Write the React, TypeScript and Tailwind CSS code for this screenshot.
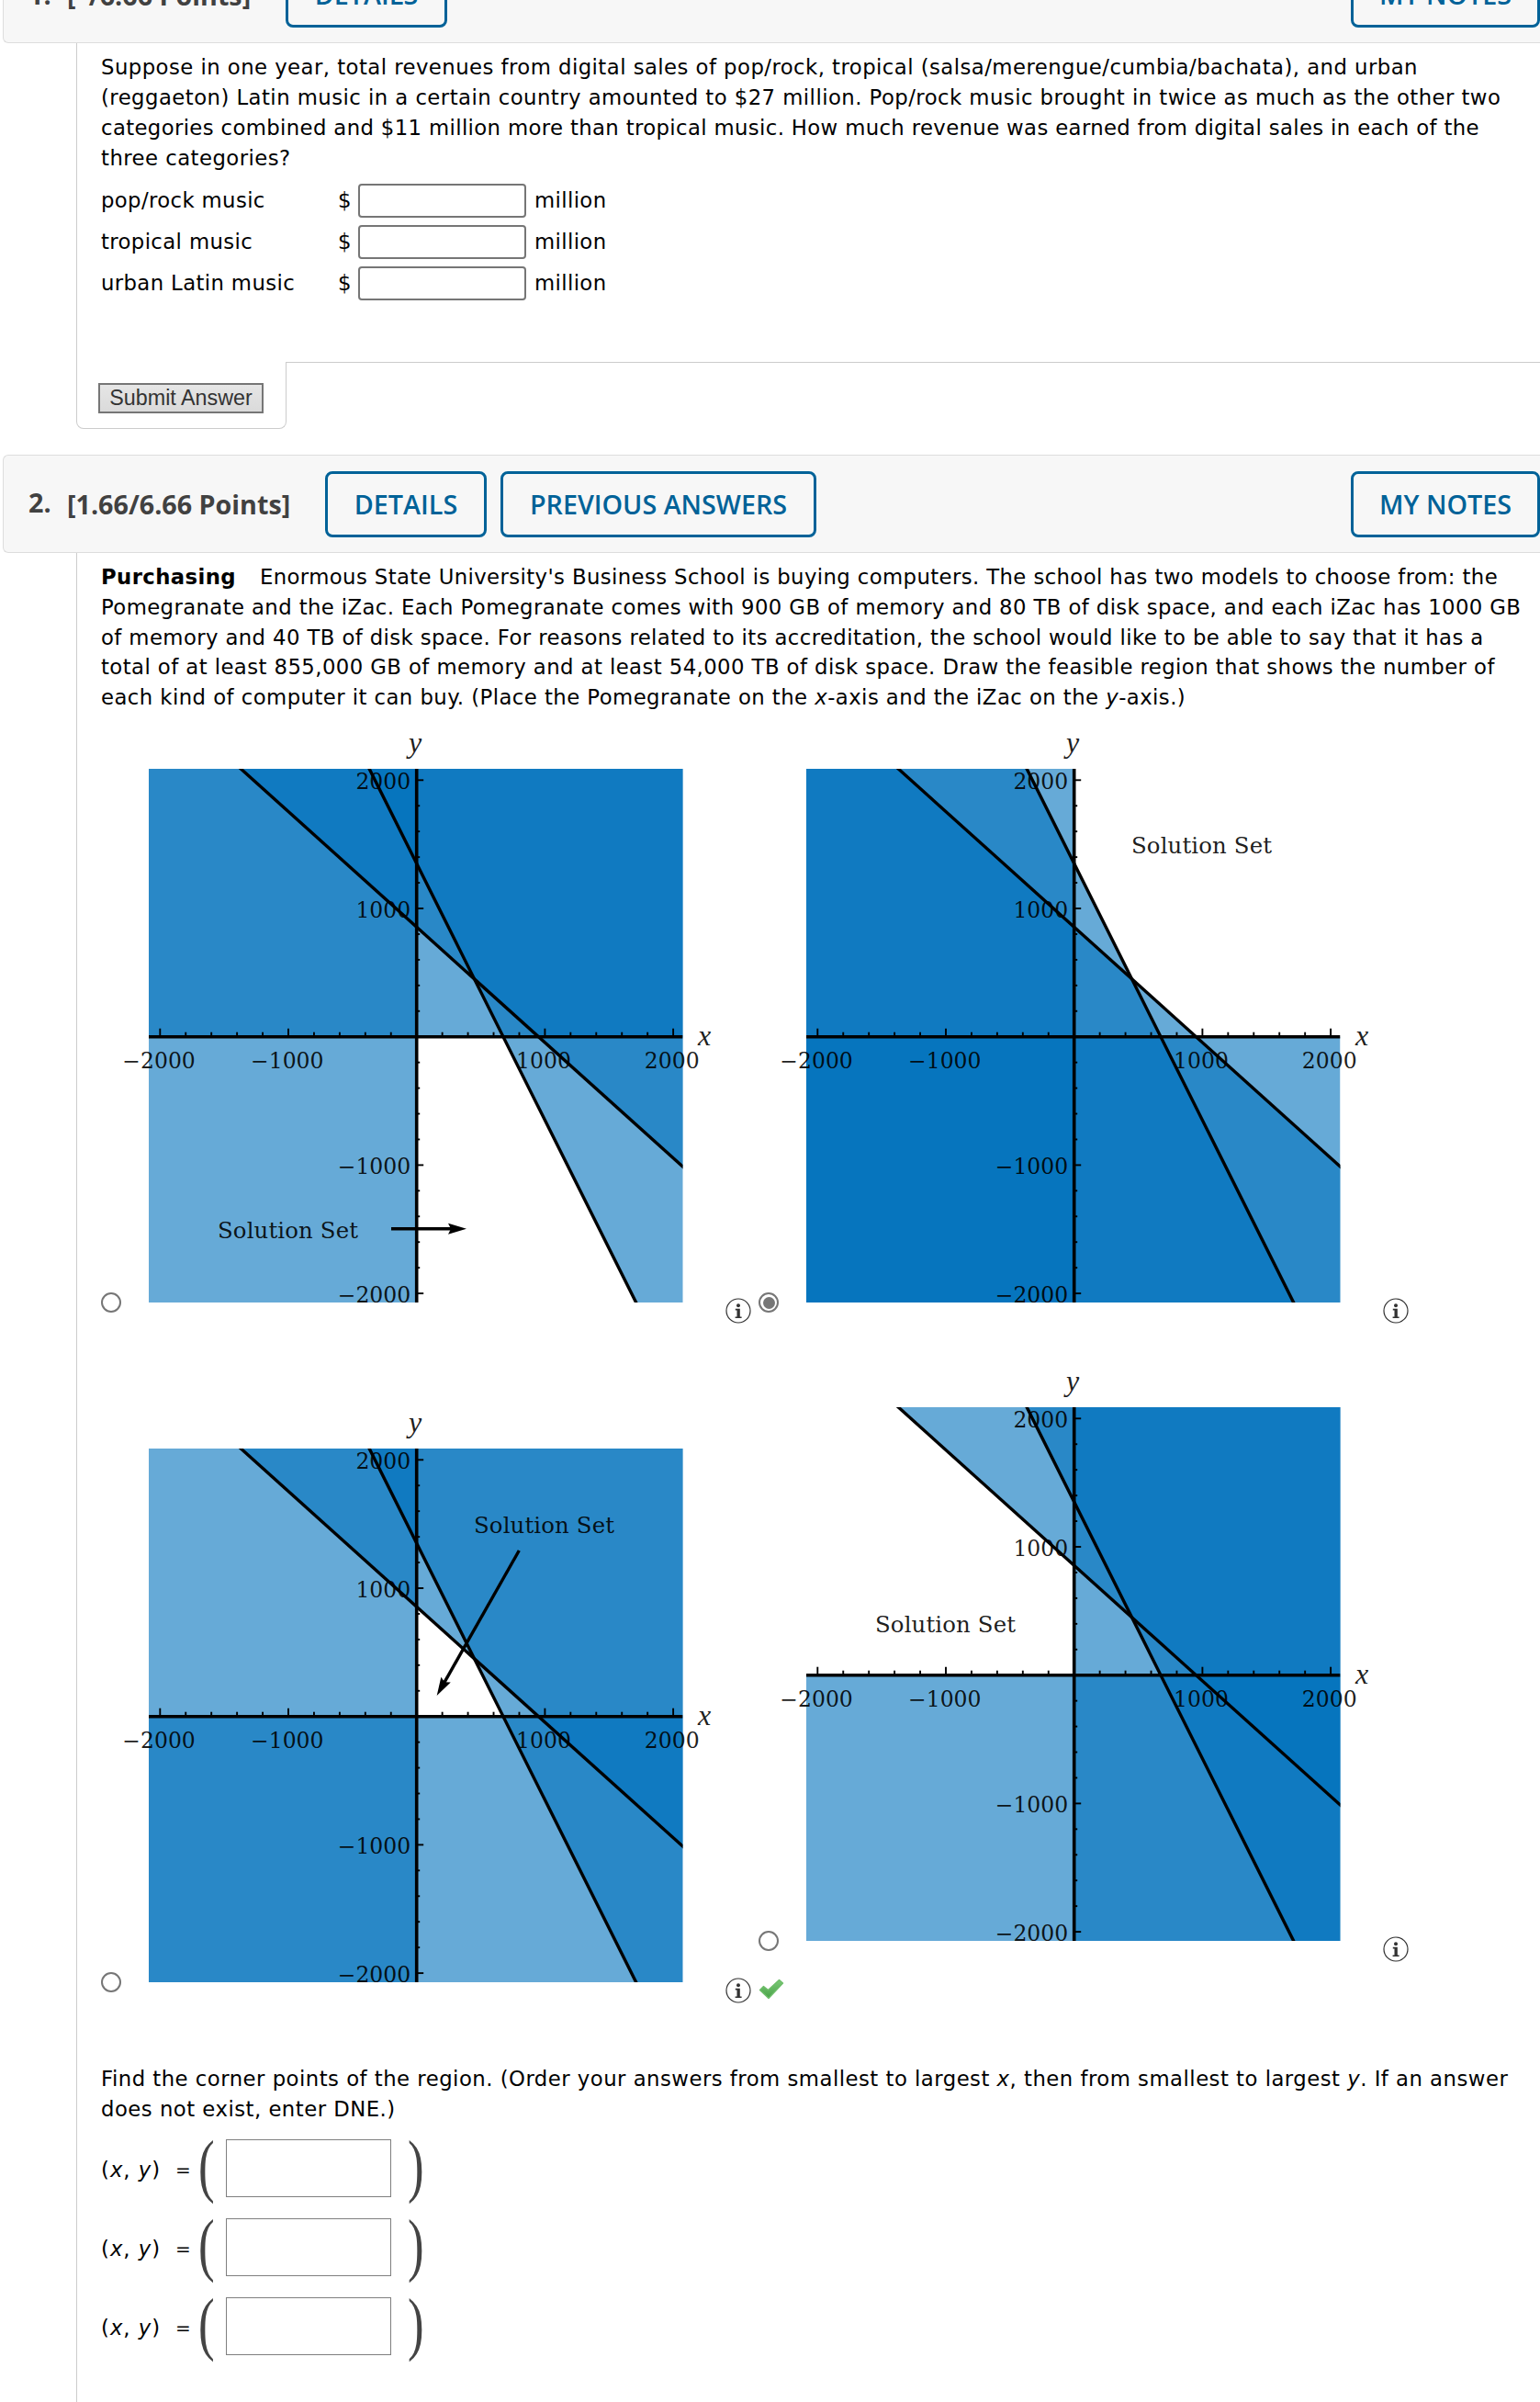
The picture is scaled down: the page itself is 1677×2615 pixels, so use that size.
import React from "react";

type Shade = "left" | "right" | "above" | "below" | "overA" | "underA" | "overB" | "underB";

interface PlotProps {
  id: string;
  shades: Shade[];
  label: { x: number; y: number };
  arrow?: { x1: number; y1: number; x2: number; y2: number };
}

// plot area inside the 656 x 620 drawing
const L = 29;
const T = 37;
const R = 610.5;
const B = 618;
const OX = 320.7;
const OY = 328.7;
const U = 0.1397;

const px = (x: number) => OX + x * U;
const py = (y: number) => OY - y * U;

// memory: 900x + 1000y = 855000, disk: 80x + 40y = 54000
const lineA = (x: number) => 855 - 0.9 * x;
const lineB = (x: number) => 1350 - 2 * x;

const halfPlane = (f: (x: number) => number, over: boolean) => {
  const far = over ? 20000 : -20000;
  return `${px(-5000)},${py(f(-5000))} ${px(5000)},${py(f(5000))} ${px(5000)},${py(far)} ${px(-5000)},${py(far)}`;
};

const shapes: Record<Shade, string> = {
  left: `${L},${T} ${OX},${T} ${OX},${B} ${L},${B}`,
  right: `${OX},${T} ${R},${T} ${R},${B} ${OX},${B}`,
  above: `${L},${T} ${R},${T} ${R},${OY} ${L},${OY}`,
  below: `${L},${OY} ${R},${OY} ${R},${B} ${L},${B}`,
  overA: halfPlane(lineA, true),
  underA: halfPlane(lineA, false),
  overB: halfPlane(lineB, true),
  underB: halfPlane(lineB, false),
};

const majors = [-2000, -1000, 1000, 2000];
const minors = Array.from({ length: 21 }, (_, i) => -2000 + i * 200).filter(v => v % 1000 !== 0);
const fmt = (v: number) => (v < 0 ? `\u2212${-v}` : `${v}`);

function Arrow({ x1, y1, x2, y2 }: { x1: number; y1: number; x2: number; y2: number }) {
  const len = Math.hypot(x2 - x1, y2 - y1);
  const angle = (Math.atan2(y2 - y1, x2 - x1) * 180) / Math.PI;
  return (
    <g transform={`translate(${x1} ${y1}) rotate(${angle})`}>
      <line x1={0} y1={0} x2={len - 14} y2={0} stroke="#000" strokeWidth={3.4} />
      <path d={`M${len} 0 L${len - 20} -6 L${len - 17} 0 L${len - 20} 6 Z`} fill="#000" />
    </g>
  );
}

function Plot({ id, shades, label, arrow }: PlotProps) {
  return (
    <svg width={656} height={620} viewBox="0 0 656 620" className="block shrink-0 tracking-normal">
      <clipPath id={id}>
        <rect x={L} y={T} width={R - L} height={B - T} />
      </clipPath>
      <g clipPath={`url(#${id})`}>
        {shades.map(s => (
          <polygon key={s} points={shapes[s]} fill="#0072bc" fillOpacity={0.6} />
        ))}
        <g stroke="#000" strokeWidth={3.4}>
          <line x1={px(-5000)} y1={py(lineA(-5000))} x2={px(5000)} y2={py(lineA(5000))} />
          <line x1={px(-5000)} y1={py(lineB(-5000))} x2={px(5000)} y2={py(lineB(5000))} />
          <line x1={L} y1={OY} x2={R} y2={OY} strokeWidth={3.6} />
          <line x1={OX} y1={T} x2={OX} y2={B} strokeWidth={3.6} />
        </g>
      </g>
      <g stroke="#000" strokeWidth={1.9}>
        {majors.map(v => (
          <React.Fragment key={v}>
            <line x1={px(v)} y1={OY} x2={px(v)} y2={OY - 9} />
            <line x1={OX} y1={py(v)} x2={OX + 7.5} y2={py(v)} />
          </React.Fragment>
        ))}
        {minors.map(v => (
          <React.Fragment key={v}>
            <line x1={px(v)} y1={OY} x2={px(v)} y2={OY - 5} />
            <line x1={OX} y1={py(v)} x2={OX + 3.5} y2={py(v)} />
          </React.Fragment>
        ))}
      </g>
      <g fill="#000" fillOpacity={0.9} fontSize={23.5} fontFamily="'DejaVu Serif', serif">
        {majors.map(v => (
          <React.Fragment key={v}>
            <text x={OX - 6.5} y={py(v) + 9.5} textAnchor="end">{fmt(v)}</text>
            <text x={v < 0 ? px(v) + 38.5 : px(v) + 28.5} y={362.5} textAnchor="end">{fmt(v)}</text>
          </React.Fragment>
        ))}
        <text x={label.x} y={label.y} fontSize={24.4} textLength={153}>Solution Set</text>
      </g>
      <g fill="#000" fillOpacity={0.88} fontSize={32} fontStyle="italic" fontFamily="'Liberation Serif', serif">
        <text x={312} y={19}>y</text>
        <text x={627} y={338}>x</text>
      </g>
      {arrow && <Arrow {...arrow} />}
    </svg>
  );
}

function Radio({ checked }: { checked?: boolean }) {
  return (
    <span className="mb-[-9px] mr-[1px] flex size-[22px] shrink-0 items-center justify-center rounded-full border-2 border-[#767676] bg-white">
      {checked && <span className="size-[13px] rounded-full bg-[#767676]" />}
    </span>
  );
}

function Info() {
  return (
    <svg width={28} height={28} viewBox="0 0 28 28" className="mb-[-21px] ml-px block shrink-0">
      <circle cx={14} cy={14} r={13} fill="#fff" stroke="#333" strokeWidth={1.2} />
      <circle cx={14} cy={8.2} r={2} fill="#333" />
      <path d="M10.8 11.8h5v8.6h1.8v1.6h-7v-1.6h1.9v-7h-1.7z" fill="#333" />
    </svg>
  );
}

function Check() {
  return (
    <svg width={28} height={23} viewBox="0 0 28 23" className="mt-[39px] block">
      <linearGradient id="check" x1="0" y1="0" x2="0" y2="1">
        <stop offset="0" stopColor="#7cc878" />
        <stop offset="1" stopColor="#48a347" />
      </linearGradient>
      <path d="M1.5 12.5 L5.5 8.5 L10.5 12.5 L22.5 1.5 L26.5 5 L11 21.5 Z" fill="url(#check)" stroke="#6dbd69" strokeWidth={1.4} strokeLinejoin="round" />
    </svg>
  );
}

function Choice({ checked, ...plot }: PlotProps & { checked?: boolean }) {
  return (
    <div className="flex w-[716px] items-end">
      <Radio checked={checked} />
      <Plot {...plot} />
      <Info />
    </div>
  );
}

function HeaderButton({ children, className = "" }: { children: React.ReactNode; className?: string }) {
  return (
    <button className={`flex h-[72px] shrink-0 items-center justify-center whitespace-nowrap rounded-lg border-[3px] border-[#006298] pt-px text-[28.7px] font-semibold text-[#006298] ${className}`}>
      {children}
    </button>
  );
}

function MoneyRow({ name }: { name: string }) {
  return (
    <div className="flex h-[45px] items-center tracking-[0.38px]">
      <span className="w-[258px]">{name}</span>
      <span className="w-[22px]">$</span>
      <span className="h-[37px] w-[183px] rounded-[4px] border-2 border-[#767676] bg-white" />
      <span className="ml-[9px]">million</span>
    </div>
  );
}

function Paren({ children }: { children: string }) {
  return (
    <span className="block origin-center scale-y-[1.42] font-['Liberation_Serif',serif] text-[53px] leading-[65px] tracking-normal text-[#444]">
      {children}
    </span>
  );
}

function CornerRow() {
  return (
    <div className="flex h-[86px] items-start">
      <span className="w-[81px] pt-[20px] tracking-[1px]">(<i>x</i>, <i>y</i>)</span>
      <span className="w-[24px] pt-[20px] text-[20px]">=</span>
      <span className="w-[31px] pl-px"><Paren>(</Paren></span>
      <span className="mt-[3px] h-[63px] w-[180px] border border-[#7f7f7f] bg-white" />
      <span className="pl-[18px]"><Paren>)</Paren></span>
    </div>
  );
}

export default function App() {
  return (
    <div className="h-[2615px] w-[1677px] overflow-hidden bg-white font-['DejaVu_Sans',Verdana,sans-serif] text-[22.75px] leading-[32.9px] tracking-[0.46px] text-black">
      <header className="ml-[3px] flex h-[47px] items-end overflow-hidden rounded-bl-md border-b border-l border-[#ddd] bg-[#f7f7f7] pb-4 pl-[27px] font-['Open_Sans',sans-serif] tracking-normal">
        <span className="w-[42px] pb-[19px] text-[28.7px] font-bold text-[#414141]">1.</span>
        <span className="w-[238px] whitespace-nowrap pb-[18px] text-[28.7px] font-bold text-[#414141]">[–/6.66 Points]</span>
        <HeaderButton className="w-[176px]">DETAILS</HeaderButton>
        <HeaderButton className="ml-auto w-[206px]">MY NOTES</HeaderButton>
      </header>

      <section className="ml-[83px] h-[347px] border-l border-[#ccc] pl-[26px] pt-[9px]">
        <p className="whitespace-nowrap pt-px">
          Suppose in one year, total revenues from digital sales of pop/rock, tropical (salsa/merengue/cumbia/bachata), and urban<br />
          (reggaeton) Latin music in a certain country amounted to $27 million. Pop/rock music brought in twice as much as the other two<br />
          <span className="tracking-[0.37px]">categories combined and $11 million more than tropical music. How much revenue was earned from digital sales in each of the</span><br />
          three categories?
        </p>
        <div className="pt-[7px]">
          <MoneyRow name="pop/rock music" />
          <MoneyRow name="tropical music" />
          <MoneyRow name="urban Latin music" />
        </div>
      </section>
      <div className="ml-[83px] flex h-[101px]">
        <div className="h-[73px] w-[229px] rounded-b-lg border-x border-b border-[#ccc] pl-[23px] pt-[23px]">
          <button className="block h-[33px] w-[180px] whitespace-nowrap border-2 border-[#767676] bg-gradient-to-b from-[#e6e6e6] to-[#dadada] pb-px font-['Liberation_Sans',sans-serif] text-[23.3px] leading-[27px] tracking-normal text-[#333]">
            Submit Answer
          </button>
        </div>
        <div className="flex-1 border-t border-[#ccc]" />
      </div>

      <header className="ml-[3px] flex h-[107px] items-center rounded-l-md border-y border-l border-[#ddd] bg-[#f7f7f7] pl-[27px] font-['Open_Sans',sans-serif] tracking-normal">
        <span className="w-[42px] pb-0.5 text-[28.7px] font-bold text-[#414141]">2.</span>
        <span className="w-[281px] whitespace-nowrap pt-0.5 text-[28.7px] font-bold text-[#414141]">[1.66/6.66 Points]</span>
        <HeaderButton className="w-[176px]">DETAILS</HeaderButton>
        <HeaderButton className="ml-[15px] w-[344px]">PREVIOUS ANSWERS</HeaderButton>
        <HeaderButton className="ml-auto w-[206px]">MY NOTES</HeaderButton>
      </header>

      <section className="ml-[83px] h-[2013px] border-l border-[#ccc] pl-[26px] pt-[10px]">
        <p className="h-[164.5px] whitespace-nowrap leading-[32.8px] tracking-[0.4px]">
          <b>Purchasing</b><span className="pl-[26px]">Enormous State University's Business School is buying computers. The school has two models to choose from: the</span><br />
          Pomegranate and the iZac. Each Pomegranate comes with 900 GB of memory and 80 TB of disk space, and each iZac has 1000 GB<br />
          of memory and 40 TB of disk space. For reasons related to its accreditation, the school would like to be able to say that it has a<br />
          <span className="tracking-[0.43px]">total of at least 855,000 GB of memory and at least 54,000 TB of disk space. Draw the feasible region that shows the number of</span><br />
          <span className="tracking-[0.45px]">each kind of computer it can buy. (Place the Pomegranate on the <i>x</i>-axis and the iZac on the <i>y</i>-axis.)</span>
        </p>

        <div className="mt-[23.5px] flex h-[695px] items-start">
          <Choice id="p1" shades={["left", "above", "overA", "overB"]} label={{ x: 104, y: 547.5 }} arrow={{ x1: 293, y1: 537.7, x2: 375, y2: 537.7 }} />
          <Choice id="p2" checked shades={["left", "below", "underA", "underB"]} label={{ x: 383, y: 129 }} />
        </div>
        <div className="flex h-[752px] items-start">
          <div className="pt-[45px]">
            <Choice id="p3" shades={["left", "below", "overA", "overB"]} label={{ x: 383, y: 128.7 }} arrow={{ x1: 432.3, y1: 148, x2: 342.7, y2: 306 }} />
          </div>
          <div>
            <Choice id="p4" shades={["right", "below", "overA", "overB"]} label={{ x: 104, y: 281.5 }} />
            <Check />
          </div>
        </div>

        <p className="whitespace-nowrap tracking-[0.49px]">
          Find the corner points of the region. (Order your answers from smallest to largest <i>x</i>, then from smallest to largest <i>y</i>. If an answer<br />
          does not exist, enter DNE.)
        </p>
        <div className="pt-[13px]">
          <CornerRow />
          <CornerRow />
          <CornerRow />
        </div>
      </section>
    </div>
  );
}
